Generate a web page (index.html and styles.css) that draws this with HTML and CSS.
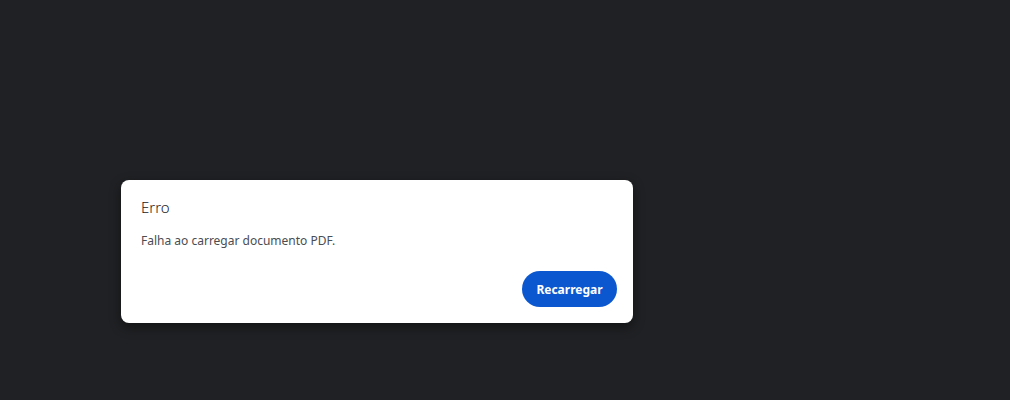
FILE: index.html
```html
<!DOCTYPE html>
<html lang="pt">
<head>
<meta charset="utf-8">
<link rel="stylesheet" href="styles.css">
</head>
<body>
<main class="viewer">
  <div class="dialog" role="dialog">
    <h2 class="dialog-title">Erro</h2>
    <p class="dialog-body">Falha ao carregar documento PDF.</p>
    <div class="dialog-buttons">
      <button class="btn-primary">Recarregar</button>
    </div>
  </div>
</main>
</body>
</html>
```

FILE: styles.css
```css
html, body {
  margin: 0;
  height: 100%;
  background: #202124;
}
.viewer {
  height: 100%;
  box-sizing: border-box;
  padding: 180px 0 0 121px;
  font-family: "Noto Sans", "Open Sans", sans-serif;
}
.dialog {
  width: 512px;
  height: 143px;
  box-sizing: border-box;
  background: #fff;
  border-radius: 8px;
  box-shadow: 0 4px 12px rgba(0,0,0,0.45);
  display: flex;
  flex-direction: column;
}
.dialog-title {
  margin: 0;
  padding: 17px 20px 0;
  font-size: 15px;
  font-weight: 300;
  line-height: 20px;
  color: #202124;
}
.dialog-body {
  margin: 0;
  padding: 15px 20px 0;
  font-size: 12px;
  line-height: 18px;
  color: #4a4d51;
}
.dialog-buttons {
  margin-top: auto;
  padding: 0 16px 16px;
  display: flex;
  justify-content: flex-end;
}
.btn-primary {
  width: 95px;
  height: 36px;
  border: 0;
  border-radius: 18px;
  background: #0b57d0;
  color: #fff;
  font-family: inherit;
  font-size: 12px;
  font-weight: 700;
  padding: 0;
}
```
